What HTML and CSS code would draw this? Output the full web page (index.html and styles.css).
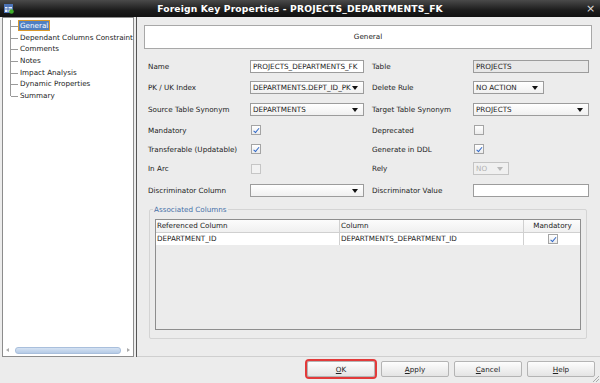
FILE: index.html
```html
<!DOCTYPE html>
<html lang="en">
<head>
  <meta charset="UTF-8">
  <title>Foreign Key Properties - PROJECTS_DEPARTMENTS_FK</title>
  <link rel="stylesheet" href="styles.css">
</head>
<body>
  <div class="window">
    <div class="titlebar">
      <svg class="app-icon" width="10" height="10" viewBox="0 0 10 10">
        <rect x="0.5" y="0.5" width="8" height="8" fill="#e8eef8" stroke="#4d74b8"/>
        <rect x="0.5" y="0.5" width="8" height="2.5" fill="#4d74b8"/>
        <line x1="1" y1="5" x2="8" y2="5" stroke="#4d74b8"/>
        <line x1="4" y1="3" x2="4" y2="8" stroke="#4d74b8"/>
        <circle cx="7.5" cy="7.5" r="2.3" fill="#3fae2a"/>
      </svg>
      <div class="title">Foreign Key Properties - PROJECTS_DEPARTMENTS_FK</div>
      <div class="close">&#215;</div>
    </div>

    <div class="main">
      <div class="nav">
        <ul class="tree">
          <li><span class="selected">General</span></li>
          <li><span>Dependant Columns Constraint</span></li>
          <li><span>Comments</span></li>
          <li><span>Notes</span></li>
          <li><span>Impact Analysis</span></li>
          <li><span>Dynamic Properties</span></li>
          <li class="last"><span>Summary</span></li>
        </ul>
        <div class="hscroll">
          <span class="arrow-left"></span>
          <span class="thumb"></span>
          <span class="arrow-right"></span>
        </div>
      </div>
      <div class="splitter"></div>

      <div class="content">
        <div class="page-header">General</div>

        <div class="form">
          <label>Name</label>
          <div class="field text">PROJECTS_DEPARTMENTS_FK</div>
          <span></span>
          <label>Table</label>
          <div class="field text readonly">PROJECTS</div>

          <label>PK / UK Index</label>
          <div class="field select">DEPARTMENTS.DEPT_ID_PK</div>
          <span></span>
          <label>Delete Rule</label>
          <div><div class="field select short">NO ACTION</div></div>

          <label>Source Table Synonym</label>
          <div class="field select">DEPARTMENTS</div>
          <span></span>
          <label>Target Table Synonym</label>
          <div class="field select">PROJECTS</div>

          <label>Mandatory</label>
          <div><span class="check checked"></span></div>
          <span></span>
          <label>Deprecated</label>
          <div><span class="check"></span></div>

          <label>Transferable (Updatable)</label>
          <div><span class="check checked"></span></div>
          <span></span>
          <label>Generate in DDL</label>
          <div><span class="check checked"></span></div>

          <label>In Arc</label>
          <div><span class="check disabled"></span></div>
          <span></span>
          <label>Rely</label>
          <div><div class="field select tiny disabled">NO</div></div>

          <label>Discriminator Column</label>
          <div class="field select"></div>
          <span></span>
          <label>Discriminator Value</label>
          <div class="field text"></div>
        </div>

        <fieldset class="assoc">
          <legend>Associated Columns</legend>
          <div class="grid">
            <div class="row head">
              <div class="cell c1">Referenced Column</div>
              <div class="cell c2">Column</div>
              <div class="cell c3">Mandatory</div>
            </div>
            <div class="row data">
              <div class="cell c1">DEPARTMENT_ID</div>
              <div class="cell c2">DEPARTMENTS_DEPARTMENT_ID</div>
              <div class="cell c3"><span class="check checked"></span></div>
            </div>
          </div>
        </fieldset>
      </div>
    </div>

    <div class="footer">
      <button class="btn ok"><u>O</u>K</button>
      <button class="btn"><u>A</u>pply</button>
      <button class="btn"><u>C</u>ancel</button>
      <button class="btn"><u>H</u>elp</button>
      <span class="grip"></span>
    </div>
  </div>
</body>
</html>
```

FILE: styles.css
```css
body {
  margin: 0;
  font-family: "DejaVu Sans", "Liberation Sans", sans-serif;
  font-size: 7.2px;
  color: #222;
  background: #ececec;
}
.window {
  width: 600px;
  height: 383px;
  display: flex;
  flex-direction: column;
  overflow: hidden;
}
.titlebar {
  height: 17px;
  flex: none;
  display: flex;
  align-items: center;
  background: linear-gradient(#4a4a4a, #1c1c1c 60%, #111);
  color: #fff;
}
.app-icon {
  margin-left: 4px;
}
.title {
  flex: 1;
  text-align: center;
  font-weight: bold;
  font-size: 9.2px;
  letter-spacing: 0.15px;
}
.close {
  width: 14px;
  font-size: 11px;
  color: #ddd;
}
.main {
  flex: 1;
  display: flex;
  min-height: 0;
}
.nav {
  width: 130px;
  margin-left: 2px;
  background: #fff;
  border: 1px solid #8c8c8c;
  display: flex;
  flex-direction: column;
}
.tree {
  list-style: none;
  margin: 0;
  padding: 2px 0 0 7px;
  flex: 1;
}
.tree li {
  position: relative;
  height: 11.7px;
  line-height: 11.7px;
  padding-left: 8px;
  white-space: nowrap;
  border-left: 1px solid #9a9a9a;
}
.tree li.last {
  border-left-color: transparent;
}
.tree li.last::after {
  content: "";
  position: absolute;
  left: -1px;
  top: 0;
  height: 6px;
  border-left: 1px solid #9a9a9a;
}
.tree li::before {
  content: "";
  position: absolute;
  left: 0;
  top: 6px;
  width: 7px;
  border-top: 1px solid #9a9a9a;
}
.tree span {
  padding: 0 1px;
}
.tree .selected {
  background: #4f7fc2;
  color: #fff;
  outline: 1px solid #d8982c;
}
.hscroll {
  height: 8px;
  margin: 0 0 2px 0;
  display: flex;
  align-items: center;
  padding: 0 3px;
  gap: 2px;
}
.hscroll .thumb {
  flex: 1;
  height: 5px;
  border-radius: 3px;
  background: linear-gradient(#d4e2f3, #b6cbe6);
  border: 1px solid #a9bfdc;
  margin: 0 4px;
}
.arrow-left, .arrow-right {
  width: 0;
  height: 0;
  border-top: 2px solid transparent;
  border-bottom: 2px solid transparent;
}
.arrow-left {
  border-right: 3px solid #aaa;
}
.arrow-right {
  border-left: 3px solid #aaa;
}
.splitter {
  width: 2px;
  border-right: 1px solid #555;
  background: #ececec;
}
.content {
  flex: 1;
  padding: 8px 8px 0 7px;
  border-bottom: 1px solid #cfcfcf;
}
.page-header {
  height: 22px;
  line-height: 22px;
  background: #fff;
  border: 1px solid #a8a8a8;
  text-align: center;
}
.form {
  display: grid;
  grid-template-columns: 102px 114px 8px 101px 116px;
  grid-template-rows: 20px 22px 22px 20px 18px 21px 22px;
  align-items: center;
  margin: 7px 0 0 4px;
}
.form label {
  white-space: nowrap;
}
.field {
  box-sizing: border-box;
  border: 1px solid #9c9c9c;
  background: #fff;
  padding: 0 2px;
  position: relative;
  white-space: nowrap;
  overflow: hidden;
  height: 13px;
  line-height: 11px;
}
.field.readonly {
  background: #e8e8e8;
}
.field.select {
  background: linear-gradient(#fff, #f0f0f0);
  padding-right: 12px;
}
.field.select::after {
  content: "";
  position: absolute;
  right: 5px;
  top: 4px;
  border-left: 3px solid transparent;
  border-right: 3px solid transparent;
  border-top: 4px solid #111;
}
.field.short {
  width: 71px;
}
.field.tiny {
  width: 36px;
}
.field.disabled {
  color: #b0b0b0;
  border-color: #c4c4c4;
  background: #f0f0f0;
}
.field.disabled::after {
  border-top-color: #b8b8b8;
}
.check {
  display: inline-block;
  width: 8px;
  height: 8px;
  border: 1px solid #a4a4a4;
  background: linear-gradient(#fff, #ececec);
  vertical-align: middle;
  position: relative;
  margin-left: 1px;
}
.check.checked::after {
  content: "";
  position: absolute;
  left: 2.5px;
  top: 0.5px;
  width: 2px;
  height: 4.5px;
  border: solid #3068c8;
  border-width: 0 1.5px 1.5px 0;
  transform: rotate(40deg);
}
.check.disabled {
  border-color: #c6c6c6;
  background: #f2f2f2;
}
.assoc {
  margin: 4px 0 0 5px;
  width: 438px;
  box-sizing: border-box;
  height: 134px;
  border: 1px solid #d4d4d4;
  border-radius: 2px;
  padding: 5px 5px 6px 5px;
}
.assoc legend {
  color: #4670a8;
  padding: 0 1px;
  margin-left: -2px;
}
.grid {
  height: 111px;
  box-sizing: border-box;
  border: 1px solid #8e8e8e;
  background: #ececec;
}
.row {
  display: flex;
  height: 12px;
  line-height: 12px;
}
.row.head {
  background: linear-gradient(#fcfcfc, #f0f0f0);
  border-bottom: 1px solid #d0d0d0;
}
.row.data {
  background: #fff;
}
.cell {
  padding-left: 1px;
  box-sizing: border-box;
  white-space: nowrap;
  border-right: 1px solid #d0d0d0;
}
.c1 {
  width: 184px;
}
.c2 {
  width: 184px;
}
.c3 {
  flex: 1;
  border-right: none;
  text-align: center;
}
.footer {
  height: 26px;
  flex: none;
  display: flex;
  justify-content: flex-end;
  align-items: flex-start;
  padding: 4px 5px 0 0;
  box-sizing: border-box;
  gap: 5px;
  position: relative;
}
.btn {
  width: 68px;
  height: 16px;
  font-family: inherit;
  font-size: 7.2px;
  color: #222;
  border: 1px solid #b4b4b4;
  border-radius: 2px;
  background: linear-gradient(#fdfdfd, #e4e4e4);
  padding: 0;
}
.btn.ok {
  outline: 2px solid #e23a3a;
  outline-offset: 0;
  margin-right: 1px;
}
.grip {
  position: absolute;
  right: 1px;
  bottom: 1px;
  width: 6px;
  height: 6px;
  background: linear-gradient(135deg, transparent 45%, #aaa 45%, #aaa 55%, transparent 55%, transparent 70%, #aaa 70%, #aaa 80%, transparent 80%);
}
```
